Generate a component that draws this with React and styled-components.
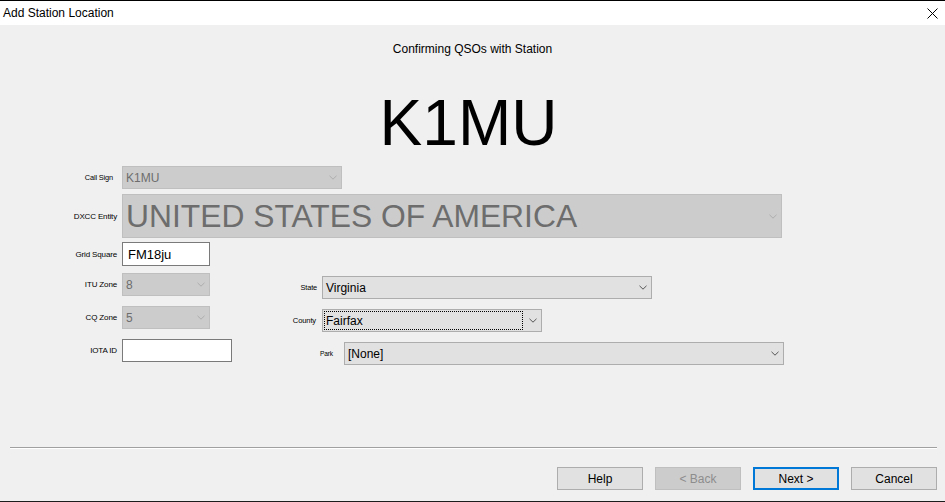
import styled, { createGlobalStyle } from "styled-components";

const GlobalStyle = createGlobalStyle`
  * { box-sizing: border-box; }
  html, body { margin: 0; padding: 0; }
  body {
    font-family: "Liberation Sans", Arial, sans-serif;
    background-color: #f0f0f0;
    color: #000;
  }
`;

const Window = styled.div`
  width: 945px;
  height: 502px;
  display: flex;
  flex-direction: column;
  background-color: #f0f0f0;
  overflow: hidden;
`;

const TitleBar = styled.div`
  height: 25px;
  border-top: 1px solid #000;
  background-color: #fff;
  display: flex;
  align-items: center;
  justify-content: space-between;
  padding: 0 7px 0 3px;
  font-size: 12px;
`;

const CloseBtn = styled.div`
  width: 12px;
  height: 12px;
  display: flex;
  align-items: center;
  justify-content: center;
`;

const Body = styled.div`
  flex: 1;
  display: flex;
  flex-direction: column;
`;

const Subtitle = styled.div`
  margin-top: 16px;
  text-align: center;
  font-size: 12px;
  line-height: 16px;
`;

const BigCall = styled.div`
  margin-top: 34px;
  text-align: center;
  font-size: 64px;
  line-height: 64px;
  padding-right: 8px;
`;

const Form = styled.div`
  margin-top: 11px;
  display: flex;
  flex-direction: column;
`;

const Row = styled.div`
  display: flex;
  align-items: center;
  gap: ${(p) => p.$gap ?? 5}px;
  margin-top: ${(p) => p.$top ?? 0}px;
`;

const Label = styled.div`
  width: ${(p) => p.$width ?? 117}px;
  flex-shrink: 0;
  text-align: right;
  font-size: ${(p) => p.$size ?? 8}px;
  padding-right: ${(p) => p.$pad ?? 0}px;
  letter-spacing: -0.15px;
  white-space: nowrap;
`;

const Lower = styled.div`
  display: flex;
  margin-top: 7px;
`;

const LeftCol = styled.div`
  width: 232px;
  display: flex;
  flex-direction: column;
`;

const RightCol = styled.div`
  display: flex;
  flex-direction: column;
  padding-top: 3px;
`;

const ComboBox = styled.div`
  width: ${(p) => p.$width}px;
  height: ${(p) => p.$height ?? 23}px;
  display: flex;
  align-items: stretch;
  background-color: ${(p) => (p.$disabled ? "#cccccc" : "#e1e1e1")};
  border: 1px solid ${(p) => (p.$disabled ? "#bfbfbf" : "#adadad")};
  color: ${(p) => (p.$disabled ? "#6d6d6d" : "#000")};
`;

const ComboValue = styled.div`
  flex: 1;
  display: flex;
  align-items: center;
  margin: 1px;
  padding-left: 1px;
  border: 1px ${(p) => (p.$focused ? "dotted #000" : "solid transparent")};
  font-size: ${(p) => p.$size ?? 12}px;
  white-space: nowrap;
  overflow: hidden;
`;

const ArrowBox = styled.div`
  width: 17px;
  display: flex;
  align-items: center;
  justify-content: center;
`;

const TextBox = styled.div`
  width: ${(p) => p.$width}px;
  height: ${(p) => p.$height ?? 23}px;
  background-color: #fff;
  border: 1px solid #7a7a7a;
  display: flex;
  align-items: center;
  padding-left: 5px;
  font-size: 13px;
`;

const Separator = styled.div`
  margin: auto 8px 0 10px;
  height: 2px;
  border-top: 1px solid #a0a0a0;
  border-bottom: 1px solid #fff;
`;

const ButtonBar = styled.div`
  display: flex;
  justify-content: flex-end;
  gap: 12px;
  padding: 18px 8px 11px 0;
`;

const Button = styled.div`
  width: 86px;
  height: 23px;
  display: flex;
  align-items: center;
  justify-content: center;
  font-size: 12px;
  background-color: ${(p) => (p.$disabled ? "#cccccc" : "#e1e1e1")};
  border: ${(p) =>
    p.$default ? "2px solid #0078d7" : `1px solid ${p.$disabled ? "#bfbfbf" : "#adadad"}`};
  color: ${(p) => (p.$disabled ? "#8d8d8d" : "#000")};
`;

const Taskbar = styled.div`
  height: 1px;
  background-color: #1c1c1c;
`;

const Chevron = ({ color }) => (
  <svg width="8" height="5" viewBox="0 0 8 5">
    <polyline points="0.5,0.8 4,4.2 7.5,0.8" fill="none" stroke={color} strokeWidth="1" />
  </svg>
);

const Combo = ({ value, width, height, disabled, focused, size }) => (
  <ComboBox $width={width} $height={height} $disabled={disabled}>
    <ComboValue $focused={focused} $size={size}>
      {value}
    </ComboValue>
    <ArrowBox>
      <Chevron color={disabled ? "#adadad" : "#555"} />
    </ArrowBox>
  </ComboBox>
);

export default function App() {
  return (
    <>
      <GlobalStyle />
      <Window>
        <TitleBar>
          <span>Add Station Location</span>
          <CloseBtn>
            <svg width="11" height="11" viewBox="0 0 11 11">
              <path d="M0.5 0.5 L10.5 10.5 M10.5 0.5 L0.5 10.5" stroke="#000" strokeWidth="1" />
            </svg>
          </CloseBtn>
        </TitleBar>

        <Body>
          <Subtitle>Confirming QSOs with Station</Subtitle>
          <BigCall>K1MU</BigCall>

          <Form>
            <Row>
              <Label $size={7.4} $pad={4}>Call Sign</Label>
              <Combo value="K1MU" width={220} disabled />
            </Row>
            <Row $top={5}>
              <Label>DXCC Entity</Label>
              <Combo value="UNITED STATES OF AMERICA" width={660} height={44} size={31.8} disabled />
            </Row>
            <Row $top={4}>
              <Label>Grid Square</Label>
              <TextBox $width={88} $height={24}>FM18ju</TextBox>
            </Row>

            <Lower>
              <LeftCol>
                <Row>
                  <Label>ITU Zone</Label>
                  <Combo value="8" width={88} disabled />
                </Row>
                <Row $top={10}>
                  <Label>CQ Zone</Label>
                  <Combo value="5" width={88} disabled />
                </Row>
                <Row $top={10}>
                  <Label>IOTA ID</Label>
                  <TextBox $width={110} />
                </Row>
              </LeftCol>

              <RightCol>
                <Row $gap={5}>
                  <Label $width={85} $size={7.4}>State</Label>
                  <Combo value="Virginia" width={330} />
                </Row>
                <Row $top={10} $gap={6}>
                  <Label $width={84} $size={7.6}>County</Label>
                  <Combo value="Fairfax" width={220} focused />
                </Row>
                <Row $top={10} $gap={11}>
                  <Label $width={101} $size={6.6}>Park</Label>
                  <Combo value="[None]" width={440} />
                </Row>
              </RightCol>
            </Lower>
          </Form>

          <Separator />
          <ButtonBar>
            <Button>Help</Button>
            <Button $disabled>&lt; Back</Button>
            <Button $default>Next &gt;</Button>
            <Button>Cancel</Button>
          </ButtonBar>
        </Body>
        <Taskbar />
      </Window>
    </>
  );
}
